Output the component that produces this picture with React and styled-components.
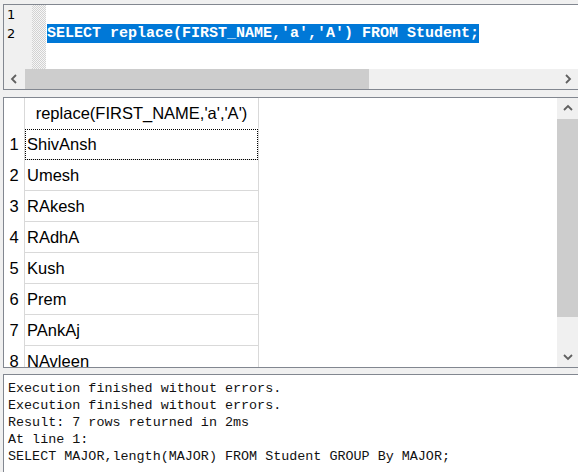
import React from "react"
import styled, { createGlobalStyle } from "styled-components"

const Global = createGlobalStyle`
  html, body { margin: 0; padding: 0; background: #f0f0f0; }
  body { width: 578px; height: 472px; overflow: hidden; }
`

const Page = styled.div`
  width: 578px;
  height: 472px;
  box-sizing: border-box;
  padding: 4px 0 0 3px;
  display: flex;
  flex-direction: column;
  background: #f0f0f0;
  overflow: hidden;
`

const Panel = styled.div`
  box-sizing: border-box;
  border: 1px solid #828790;
  border-right: none;
  border-bottom: ${(p) => (p.$open ? "none" : "1px solid #828790")};
  background: #fff;
  overflow: hidden;
  flex: ${(p) => p.$flex || "none"};
  height: ${(p) => (p.$h ? p.$h + "px" : "auto")};
  margin-bottom: ${(p) => p.$mb || 0}px;
`

/* editor */
const Editor = styled.div`
  display: flex;
  height: 64px;
`
const Gutter = styled.div`
  width: 28px;
  background: #f0f0f0;
  font-family: "DejaVu Sans", Verdana, sans-serif;
  font-size: 13px;
  line-height: 19px;
  color: #000;
  div { padding-left: 3px; }
`
const FoldMargin = styled.div`
  width: 14px;
  background-color: #fff;
  background-image: conic-gradient(#d2d2d2 25%, #f6f6f6 0 50%, #d2d2d2 0 75%, #f6f6f6 0);
  background-size: 2px 2px;
`
const Code = styled.div`
  flex: 1;
  padding-left: 1px;
  font-family: "Liberation Mono", "Courier New", monospace;
  font-size: 15px;
  font-weight: bold;
  line-height: 19px;
  white-space: pre;
`
const Line = styled.div`
  height: 19px;
`
const Selected = styled.span`
  background: #0078d7;
  color: #fff;
  display: inline-block;
  height: 19px;
`

const HScroll = styled.div`
  display: flex;
  height: 20px;
  background: #f0f0f0;
`
const ArrowBtn = styled.div`
  width: ${(p) => p.$w || 21}px;
  height: ${(p) => p.$h || 20}px;
  display: flex;
  align-items: center;
  justify-content: center;
  background: #f0f0f0;
  flex: none;
`
const Thumb = styled.div`
  background: #cdcdcd;
  flex: none;
  width: ${(p) => (p.$w ? p.$w + "px" : "auto")};
  height: ${(p) => (p.$h ? p.$h + "px" : "auto")};
`
const Track = styled.div`
  flex: 1;
  background: #f0f0f0;
`

/* results grid */
const Results = styled.div`
  display: flex;
  height: 100%;
`
const Grid = styled.div`
  flex: 1;
  overflow: hidden;
  font-family: "Liberation Sans", Tahoma, sans-serif;
  font-size: 16.5px;
  color: #000;
`
const Row = styled.div`
  display: flex;
  height: 31px;
`
const Num = styled.div`
  width: 20px;
  border-right: 1px solid #d9d9d9;
  display: flex;
  align-items: center;
  justify-content: center;
`
const Cell = styled.div`
  width: 234px;
  box-sizing: border-box;
  border-right: 1px solid #d9d9d9;
  border-bottom: 1px solid ${(p) => (p.$head ? "#fff" : "#d9d9d9")};
  display: flex;
  align-items: center;
  justify-content: ${(p) => (p.$head ? "center" : "flex-start")};
  padding-left: ${(p) => (p.$head ? 0 : 2)}px;
  position: relative;
  ${(p) =>
    p.$focus &&
    `&::after {
      content: "";
      position: absolute;
      left: 0; top: 0; right: 0; bottom: -1px;
      border: 1px dotted #000;
    }`}
`
const VScroll = styled.div`
  width: 21px;
  display: flex;
  flex-direction: column;
  background: #f0f0f0;
`

/* messages */
const Messages = styled.div`
  padding: 5px 0 0 4px;
  font-family: "Liberation Mono", "Courier New", monospace;
  font-size: 13.4px;
  line-height: 17px;
  color: #111;
  white-space: pre;
`

const Chevron = ({ dir }) => {
  const pts = {
    left: "6,1 2,5 6,9",
    right: "3,1 7,5 3,9",
    up: "1,6 5,2 9,6",
    down: "1,3 5,7 9,3",
  }[dir]
  return (
    <svg width="10" height="10" viewBox="0 0 10 10">
      <polyline points={pts} fill="none" stroke="#606060" strokeWidth="1.8" />
    </svg>
  )
}

const names = ["ShivAnsh", "Umesh", "RAkesh", "RAdhA", "Kush", "Prem", "PAnkAj", "NAvleen"]

export default function App() {
  return (
    <Page>
      <Global />
      <Panel $h={86} $mb={7}>
        <Editor>
          <Gutter>
            <div>1</div>
            <div>2</div>
          </Gutter>
          <FoldMargin />
          <Code>
            <Line />
            <Line>
              <Selected>SELECT replace(FIRST_NAME,'a','A') FROM Student;</Selected>
            </Line>
          </Code>
        </Editor>
        <HScroll>
          <ArrowBtn $w={21}>
            <Chevron dir="left" />
          </ArrowBtn>
          <Thumb $w={344} />
          <Track />
          <ArrowBtn $w={21}>
            <Chevron dir="right" />
          </ArrowBtn>
        </HScroll>
      </Panel>

      <Panel $h={271} $mb={6}>
        <Results>
          <Grid>
            <Row>
              <Num />
              <Cell $head>replace(FIRST_NAME,'a','A')</Cell>
            </Row>
            {names.map((n, i) => (
              <Row key={n}>
                <Num>{i + 1}</Num>
                <Cell $focus={i === 0}>{n}</Cell>
              </Row>
            ))}
          </Grid>
          <VScroll>
            <ArrowBtn $w={21} $h={21}>
              <Chevron dir="up" />
            </ArrowBtn>
            <Thumb $h={198} />
            <Track />
            <ArrowBtn $w={21} $h={21}>
              <Chevron dir="down" />
            </ArrowBtn>
          </VScroll>
        </Results>
      </Panel>

      <Panel $flex="1" $open>
        <Messages>
          {"Execution finished without errors.\nExecution finished without errors.\nResult: 7 rows returned in 2ms\nAt line 1:\nSELECT MAJOR,length(MAJOR) FROM Student GROUP By MAJOR;"}
        </Messages>
      </Panel>
    </Page>
  )
}
